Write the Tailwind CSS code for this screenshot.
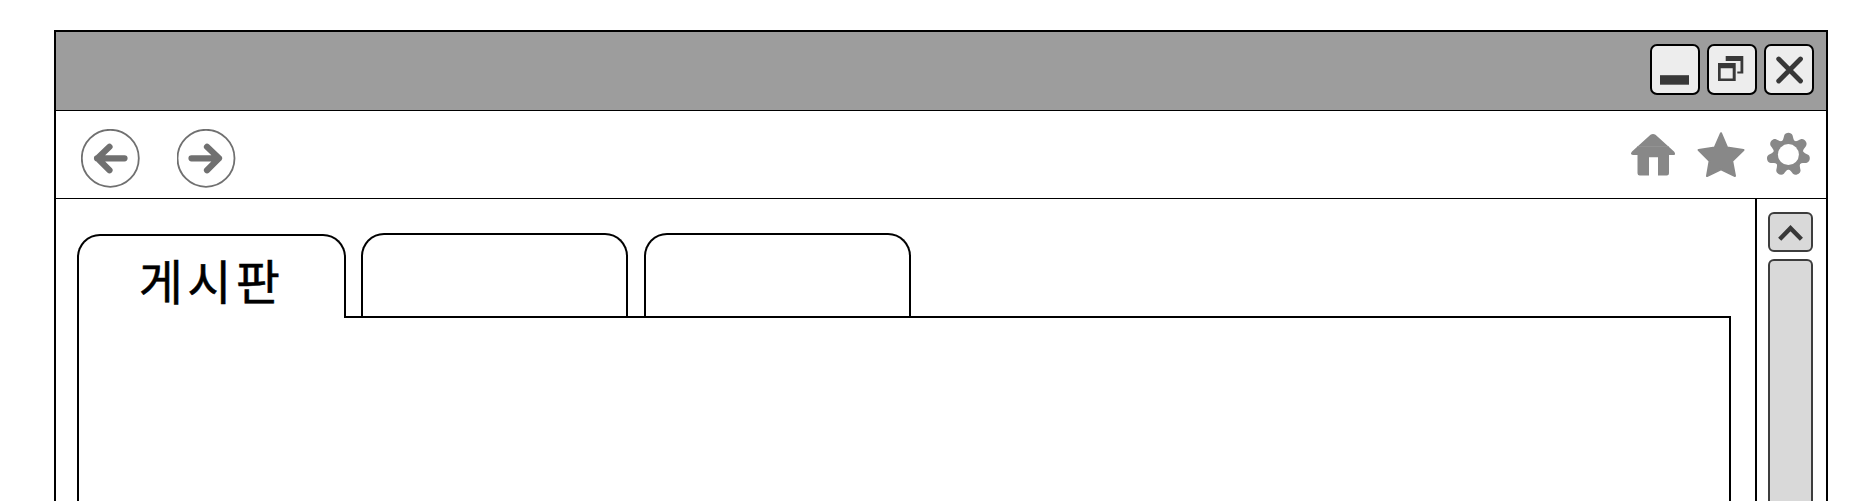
<!DOCTYPE html>
<html lang="ko">
<head>
<meta charset="utf-8">
<title>게시판</title>
<script src="https://cdn.jsdelivr.net/npm/@tailwindcss/browser@4"></script>
</head>
<body class="h-[501px] overflow-hidden bg-white pt-[30px] pl-[54px] font-['Noto_Sans_CJK_KR',sans-serif]">
<div class="flex h-[471px] w-[1774px] flex-col border-2 border-b-0 border-black">
  <header class="flex h-[79px] shrink-0 items-start justify-end gap-[7px] border-b border-black bg-[#9d9d9d] pt-3 pr-3">
    <button aria-label="최소화" class="h-[51px] w-[50px] rounded-[7px] border-2 border-black bg-[#ededed]">
      <svg class="block size-full" viewBox="0 0 46 47"><path d="M8 29.2h29v9.5H8z" fill="#383838"/></svg>
    </button>
    <button aria-label="이전 크기로" class="h-[51px] w-[50px] rounded-[7px] border-2 border-black bg-[#ededed]">
      <svg class="block size-full" viewBox="0 0 46 47"><path d="M16.7 10h17.6v17.4h-6v-2h3.2V15H16.7zM9 17h17.7V35H9zM11.7 22.2v10.2h12V22.2z" fill="#383838" fill-rule="evenodd"/></svg>
    </button>
    <button aria-label="닫기" class="h-[51px] w-[50px] rounded-[7px] border-2 border-black bg-[#ededed]">
      <svg class="block size-full" viewBox="0 0 46 47"><path d="M12.7 13l21.8 22M34.5 13L12.7 35" stroke="#383838" stroke-width="4.8" stroke-linecap="round" fill="none"/></svg>
    </button>
  </header>
  <nav class="flex h-[88px] shrink-0 justify-between border-b border-black pt-[18px] pr-[15px] pl-[25px]">
    <div class="flex gap-[37px]">
      <svg class="size-[59px]" viewBox="0 0 59 59" fill="none" stroke="#707070"><circle cx="29.3" cy="29.3" r="28.5" stroke-width="1.8"/><path d="M43.5 29.3H16M28.5 17.8L16.5 29.3L28.5 41.2" stroke-width="6.2" stroke-linecap="round" stroke-linejoin="round"/></svg>
      <svg class="size-[59px]" viewBox="0 0 59 59" fill="none" stroke="#707070"><circle cx="29" cy="29.3" r="28.5" stroke-width="1.8"/><path d="M14.5 29.3H42M30 17.8L42 29.3L30 41.2" stroke-width="6.2" stroke-linecap="round" stroke-linejoin="round"/></svg>
    </div>
    <div class="flex gap-[22px] pt-[3px]">
      <svg class="h-[46px] w-[45px]" viewBox="0 0 45 46" fill="#888"><path d="M20.5 2.8Q23 1 25.5 2.8L44 19.6Q46.5 23 43 23H39V41.3Q39 43.5 36.8 43.5H28V25.3H19V43.5H9.7Q7.5 43.5 7.5 41.3V23H3Q-.5 23 2 19.6Z"/><path d="M7 14.5h32" stroke="#999" stroke-width=".6"/></svg>
      <svg class="h-[46px] w-[48px]" viewBox="0 0 48 46" fill="#888" stroke="#888" stroke-width="2" stroke-linejoin="round"><path d="M24 1.2L30.2 15.6L46.5 18L35.2 29L38 44L24 37.3L10 44L12.6 29L1.6 18L17.7 15.6Z"/></svg>
      <svg class="h-[46px] w-[44px] overflow-visible" viewBox="0 0 44 46" fill="#888">
        <defs><path id="tooth" d="M0 0L-6.5-13.5C-5-14.6-4.9-17-4.2-19.2C-3.1-22.7 3.1-22.7 4.2-19.2C4.9-17 5-14.6 6.5-13.5Z"/></defs>
        <g transform="translate(21.4 22.6)">
          <circle r="14.8"/>
          <use href="#tooth"/>
          <use href="#tooth" transform="rotate(51.43)"/>
          <use href="#tooth" transform="rotate(102.86)"/>
          <use href="#tooth" transform="rotate(154.29)"/>
          <use href="#tooth" transform="rotate(205.71)"/>
          <use href="#tooth" transform="rotate(257.14)"/>
          <use href="#tooth" transform="rotate(308.57)"/>
          <circle r="10.5" fill="#fff"/>
        </g>
      </svg>
    </div>
  </nav>
  <div class="flex min-h-0 flex-1">
    <main class="flex min-w-0 flex-1 flex-col pr-[24px] pl-[21px]">
      <div class="z-10 -mb-[2px] flex h-[119px] shrink-0 items-end">
        <div class="flex h-[84px] w-[269px] items-center justify-center rounded-t-[23px] border-2 border-b-0 border-black bg-white">
          <span class="pt-[4px] text-[48px] leading-none font-normal tracking-[4.3px] text-black [-webkit-text-stroke:0.5px_black]">게시판</span>
        </div>
        <div class="mb-[2px] ml-[15px] h-[83px] w-[267px] rounded-t-[23px] border-2 border-b-0 border-black"></div>
        <div class="mb-[2px] ml-4 h-[83px] w-[267px] rounded-t-[23px] border-2 border-b-0 border-black"></div>
      </div>
      <div class="flex flex-1">
        <div class="w-[267px] border-l-2 border-black"></div>
        <div class="flex-1 border-t-2 border-r-2 border-black"></div>
      </div>
    </main>
    <aside class="flex w-[71px] shrink-0 flex-col gap-[7px] border-l-2 border-black pt-[13px] pl-[11px]">
      <button aria-label="위로" class="h-[40px] w-[45px] shrink-0 rounded-[6px] border-2 border-[#3d3d3d] bg-[#d9d9d9]">
        <svg class="block size-full" viewBox="0 0 41 36"><path d="M9.7 25.2L20.5 14.2L31.4 25.2" fill="none" stroke="#383838" stroke-width="4.4"/></svg>
      </button>
      <div class="w-[45px] flex-1 rounded-t-[6px] border-2 border-b-0 border-[#3d3d3d] bg-[#d9d9d9]"></div>
    </aside>
  </div>
</div>
</body>
</html>
